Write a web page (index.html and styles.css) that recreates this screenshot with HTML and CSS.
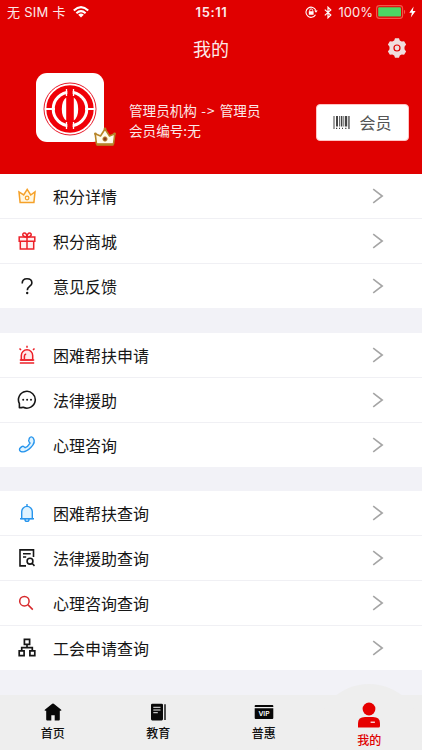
FILE: index.html
```html
<!DOCTYPE html>
<html lang="zh-CN">
<head>
<meta charset="utf-8">
<title>我的</title>
<link rel="stylesheet" href="styles.css">
</head>
<body>
<div class="app">
  <header class="header">
    <div class="status">
      <div class="status-left">
        <span>无 SIM 卡</span>
        <svg class="wifi" viewBox="0 0 16 12"><g fill="none" stroke="#fff" stroke-width="2.1"><path d="M.8 4.5Q8-2.1 15.2 4.5M3.4 7.2Q8 3 12.6 7.2"/></g><path d="M5.2 8.7Q8 6.5 10.8 8.7L8 11.5z" fill="#fff"/></svg>
      </div>
      <b class="clock">15:11</b>
      <div class="status-right">
        <svg class="lock" viewBox="0 0 13 12"><g fill="none" stroke="#fff"><path d="M10.5 8.8A5.1 5.1 0 1 1 10.9 4.6" stroke-width="1.1"/><path d="M4.7 5.6V4.4a1.5 1.5 0 0 1 3 0v1.2" stroke-width=".9"/></g><path d="M3.8 5.2h4.8v3.6H3.8zM9.2 4.4h3.5L11 6.8z" fill="#fff"/></svg>
        <svg class="bluetooth" viewBox="0 0 8 13"><path d="M.8 3.6l6 5.4L4 11.8V1.2L6.8 4l-6 5.4" fill="none" stroke="#fff" stroke-width="1.2"/></svg>
        <span class="percent">100%</span>
        <svg class="battery" viewBox="0 0 30 14"><rect x=".6" y=".6" width="26" height="12.8" rx="2.8" fill="none" stroke="#f5564a" stroke-width="1.1"/><rect x="2.2" y="2.2" width="22.8" height="9.4" rx="1.2" fill="#4cd964"/><path d="M28 4.8q1.2.6 1.2 2.2T28 9.2z" fill="#f5564a"/></svg>
        <svg class="bolt" viewBox="0 0 7 12"><path d="M4.6.5L.3 6.7h2.6L1.8 11.5 6.6 5H3.8z" fill="#fff"/></svg>
      </div>
    </div>
    <div class="titlebar">
      <h1>我的</h1>
      <svg class="gear" viewBox="0 0 20 20"><path fill="#f0dede" fill-rule="evenodd" d="M7.2 2.5L8 .3h4l.8 2.2 1.9 1.1 2.4-.4 2 3.4L17.5 8.8v2.4l1.6 2.2-2 3.4-2.4-.4-1.9 1.1-.8 2.2H8l-.8-2.2-1.9-1.1-2.4.4-2-3.4 1.6-2.2V8.8L.9 6.6l2-3.4 2.4.4zM10 6.4a3.6 3.6 0 1 0 0 7.2 3.6 3.6 0 0 0 0-7.2z"/><circle cx="10" cy="10" r="2.4" fill="#f0dede"/></svg>
    </div>
    <div class="profile">
      <div class="avatar">
        <svg class="emblem" viewBox="0 0 54 54">
          <circle cx="27" cy="27" r="26" fill="none" stroke="#e50012" stroke-width=".9"/>
          <circle cx="27" cy="27" r="21" fill="none" stroke="#f00008" stroke-width="5.4"/>
          <circle cx="27" cy="27" r="15.3" fill="#f00008"/>
          <path d="M1.8 27H12M42 27h10.2" stroke="#fff" stroke-width="2"/>
          <path d="M23.2 15.4v23.2q-4.4-3.4-4.4-11.6t4.4-11.6zM30.8 15.4v23.2q4.4-3.4 4.4-11.6t-4.4-11.6z" fill="#fff"/>
          <path d="M23.6 7v7M30.4 7v7M23.6 40v7M30.4 40v7" stroke="#fff" stroke-width="1.5"/>
          <path d="M24.4 4h5.2v46h-5.2z" fill="#f00008"/>
        </svg>
        <svg class="crown-badge" viewBox="0 0 22 20"><path d="M2.5 17L1.2 6.8 6.5 9 11 2l4.5 7 5.3-2.2L19.5 17z" fill="#fffbed" stroke="#b78529" stroke-width="1.6" stroke-linejoin="round"/><path d="M2.5 17.8h17" stroke="#b78529" stroke-width="2"/><circle cx="11" cy="12" r="2.2" fill="#8c3d1c" stroke="#c79841" stroke-width=".9"/><g fill="#b78529"><circle cx="11" cy="2" r="1.4"/><circle cx="1.4" cy="6.8" r="1.3"/><circle cx="20.6" cy="6.8" r="1.3"/></g></svg>
      </div>
      <div class="identity"><div>管理员机构 <span class="arrow">-&gt;</span> 管理员</div><div>会员编号:无</div></div>
      <button class="member">
        <svg class="barcode" viewBox="0 0 17 13"><g fill="#444"><path d="M.5 0h1v13h-1zM3 0h2v10.6H3zM6 0h.8v10.6H6zM7.8 0h1.6v10.6H7.8zM10.4 0h.8v10.6h-.8zM12 0h2.2v10.6H12zM15.3 0h1.3v13h-1.3zM3 11.7h1.2V13H3zM6 11.7h1V13H6zM9 11.7h1V13H9zM12.2 11.7h1.2V13h-1.2z"/></g></svg>
        <span>会员</span>
      </button>
    </div>
  </header>

  <main class="menu">
    <section class="group">
      <div class="row"><svg class="icon" viewBox="0 0 20 20"><path d="M3.1 16.4L2 5.9l4.7 3.1L10.2 3.4l3.5 5.6 4.3-3.1-1.1 10.5z" fill="#fff7e2" stroke="#f5a129" stroke-width="1.5"/><circle cx="10.1" cy="12" r="1.8" fill="none" stroke="#f5a129" stroke-width="1.2"/></svg><span>积分详情</span><svg class="chevron" viewBox="0 0 12 16"><path d="M1.2 1.2L10.2 8l-9 6.8"/></svg></div>
      <div class="row"><svg class="icon" viewBox="0 0 20 20"><g fill="#fff0f0" stroke="#ed2028" stroke-width="1.5"><path d="M3.3 10.3h13.4v7.7H3.3zM2.2 6.1h15.6v4.2H2.2z"/><path d="M9.8 5.9C4.6 6.2 5.2 1.9 7.3 1.9c2 0 2.5 2 2.5 4zM10.2 5.9c5.2.3 4.6-4 2.5-4-2 0-2.5 2-2.5 4zM10 6.1V18"/></g></svg><span>积分商城</span><svg class="chevron" viewBox="0 0 12 16"><path d="M1.2 1.2L10.2 8l-9 6.8"/></svg></div>
      <div class="row"><svg class="icon" viewBox="0 0 20 20"><path d="M5.2 7.4C5.2 4.1 7.2 2.7 10 2.7s4.9 1.5 4.9 4.2c0 3.3-4.6 3.2-4.6 7.3" fill="none" stroke="#161616" stroke-width="1.6"/><circle cx="10.2" cy="17" r="1.2" fill="#161616"/></svg><span>意见反馈</span><svg class="chevron" viewBox="0 0 12 16"><path d="M1.2 1.2L10.2 8l-9 6.8"/></svg></div>
    </section>
    <section class="group">
      <div class="row"><svg class="icon" viewBox="0 0 20 20"><g fill="none" stroke="#ed2028" stroke-width="1.5"><path d="M4.3 14.9v-4.4a5.7 5.7 0 0 1 11.4 0v4.4z" fill="#ffeaea"/><path d="M2.8 15h14.4M2.8 18h14.4M10 .8v2M2.5 3.5L4 5M17.5 3.5L16 5M7.4 14V11q0-1.7 1.8-2"/></g></svg><span>困难帮扶申请</span><svg class="chevron" viewBox="0 0 12 16"><path d="M1.2 1.2L10.2 8l-9 6.8"/></svg></div>
      <div class="row"><svg class="icon" viewBox="0 0 20 20"><path d="M2.4 17.8v-4.2A8.4 8.4 0 1 1 6.2 17.3q-1.4.5-3.8.5z" fill="none" stroke="#161616" stroke-width="1.6" stroke-linejoin="round"/><g fill="#161616"><circle cx="6.2" cy="9.8" r="1"/><circle cx="10.1" cy="9.8" r="1"/><circle cx="14" cy="9.8" r="1"/></g></svg><span>法律援助</span><svg class="chevron" viewBox="0 0 12 16"><path d="M1.2 1.2L10.2 8l-9 6.8"/></svg></div>
      <div class="row"><svg class="icon" viewBox="0 0 20 20"><path d="M12.4 3.1c1.1-1.7 2.8-1.5 3.9 0 1.7 2.5.6 6.3-2.5 9.5-3.5 3.5-7.7 4.9-10.2 3.7-1.4-.9-1.4-2.5-.3-3.4l1.5-1.3q1.2-.9 2.2.1l1.2 1q2.6-.9 4.8-4.6l-1-1.5q-.7-1.3.1-2.4z" fill="#dff3ff" stroke="#2795ed" stroke-width="1.4"/></svg><span>心理咨询</span><svg class="chevron" viewBox="0 0 12 16"><path d="M1.2 1.2L10.2 8l-9 6.8"/></svg></div>
    </section>
    <section class="group">
      <div class="row"><svg class="icon" viewBox="0 0 20 20"><g fill="none" stroke="#2795ed" stroke-width="1.4"><path d="M4.7 15.6V8.7a5.3 5.3 0 0 1 10.6 0v6.9z" fill="#dff3ff"/><path d="M3 15.8h14M10 1v2.2M8 16.4q0 1.9 2 1.9t2-1.9"/></g></svg><span>困难帮扶查询</span><svg class="chevron" viewBox="0 0 12 16"><path d="M1.2 1.2L10.2 8l-9 6.8"/></svg></div>
      <div class="row"><svg class="icon" viewBox="0 0 20 20"><g fill="none" stroke="#161616" stroke-width="1.6"><path d="M9 17.9H3V1.9h13.5v7.2M6 5.7h7.7M6 9h3.2"/><circle cx="13" cy="13.2" r="2.9"/><path d="M15 15.3l2.5 2.6"/></g></svg><span>法律援助查询</span><svg class="chevron" viewBox="0 0 12 16"><path d="M1.2 1.2L10.2 8l-9 6.8"/></svg></div>
      <div class="row"><svg class="icon" viewBox="0 0 20 20"><g fill="none" stroke="#d7292c" stroke-width="1.5"><circle cx="7.4" cy="8.2" r="4.7"/><path d="M10.8 11.6l5 5"/></g></svg><span>心理咨询查询</span><svg class="chevron" viewBox="0 0 12 16"><path d="M1.2 1.2L10.2 8l-9 6.8"/></svg></div>
      <div class="row"><svg class="icon" viewBox="0 0 20 20"><g fill="none" stroke="#161616" stroke-width="1.7"><path d="M7.4 1.4h5.2v5H7.4zM2.2 12.9h4.9v4.8H2.2zM12.9 12.9h4.9v4.8h-4.9zM10 6.6v3M4.7 12.9V9.7h10.6v3.2"/></g></svg><span>工会申请查询</span><svg class="chevron" viewBox="0 0 12 16"><path d="M1.2 1.2L10.2 8l-9 6.8"/></svg></div>
    </section>
  </main>

  <nav class="tabs">
    <div class="tab"><svg class="tab-icon" viewBox="0 0 20 20"><path d="M10 1.6q.7 0 1.4.6l6.8 5.5q.8 1-.7 1h-.7v8.8q0 1-1 1h-4.1v-5.2H8.3v5.2H4.2q-1 0-1-1V8.7h-.7q-1.5 0-.7-1l6.8-5.5q.7-.6 1.4-.6z"/></svg><span>首页</span></div>
    <div class="tab"><svg class="tab-icon" viewBox="0 0 20 20"><rect x="3" y="1.8" width="12" height="16.6" rx="1.3"/><path d="M16.3 2.3h1.4v15.8h-1.4z"/><path d="M5.3 5.3h7.2M5.3 8h7.2M5.3 10.7h4.5" stroke="#eee" stroke-width="1"/></svg><span>教育</span></div>
    <div class="tab"><svg class="tab-icon" viewBox="0 0 20 20"><path d="M1.6 2.9h16.8q.9 0 .9 1v1.2H.7V3.9q0-1 .9-1zM.7 6.2h18.6v9.9q0 1-1 1H1.7q-1 0-1-1z"/><text class="vip" x="10" y="14" text-anchor="middle">VIP</text></svg><span>普惠</span></div>
    <div class="tab active"><svg class="user-icon" viewBox="0 0 24 26"><circle cx="12" cy="7" r="6.4"/><path d="M1 25.5v-4.2q0-6.3 7-6.3h8q7 0 7 6.3v2.7q0 1.5-1.5 1.5z"/><path d="M13.6 20.2h4.3" stroke="#fff" stroke-width="1.2"/></svg><span>我的</span></div>
  </nav>
</div>
</body>
</html>
```
FILE: styles.css
```css
* { box-sizing: border-box; }

body {
  margin: 0;
  background: #f2f2f7;
  color: #161616;
  font-family: "Noto Sans CJK SC", sans-serif;
}

svg { display: block; flex: none; }

.app {
  width: 422px;
  height: 750px;
  display: flex;
  flex-direction: column;
  overflow: hidden;
}

.header {
  height: 174px;
  flex: none;
  background: #e00000;
  color: #fbeaea;
}

.status {
  height: 24px;
  display: grid;
  grid-template-columns: 1fr auto 1fr;
  align-items: center;
  padding: 0 6px 0 7px;
  font-family: Inter, "Noto Sans CJK SC", sans-serif;
  font-size: 13px;
  line-height: 24px;
}

.status-left, .status-right { display: flex; align-items: center; }
.status-left { gap: 7px; letter-spacing: 0.25px; }
.status-right { justify-content: flex-end; }
.wifi { width: 16px; height: 12px; }
.clock { font-weight: 600; letter-spacing: 0.6px; }
.lock { width: 13px; height: 12px; margin-right: 6px; }
.bluetooth { width: 8px; height: 13px; margin-right: 7px; }
.percent { margin-right: 3px; }
.battery { width: 30px; height: 14px; margin-right: 3px; }
.bolt { width: 7px; height: 12px; }

.titlebar {
  height: 48px;
  display: grid;
  grid-template-columns: 1fr auto 1fr;
  align-items: center;
  padding-right: 15px;
  padding-left: 15px;
}

.titlebar h1 {
  grid-column: 2;
  margin: 0;
  font-size: 18px;
  font-weight: 400;
  line-height: 46px;
}

.gear { width: 20px; height: 20px; justify-self: end; }

.profile {
  display: flex;
  align-items: flex-start;
  padding: 1px 13px 0 36px;
}

.avatar {
  position: relative;
  width: 68px;
  height: 69px;
  padding: 8.5px 7.3px;
  border-radius: 11px;
  background: #fff;
}

.emblem { width: 54px; height: 54px; }

.crown-badge {
  position: absolute;
  left: 58px;
  top: 54px;
  width: 22px;
  height: 20px;
}

.identity {
  margin: 27px 0 0 25px;
  font-size: 13.6px;
  line-height: 20px;
  white-space: nowrap;
}

.arrow { margin: 0 1.2px; letter-spacing: 1px; }

.member {
  display: flex;
  align-items: center;
  justify-content: center;
  gap: 9px;
  width: 93px;
  height: 37px;
  margin: 31px 0 0 auto;
  padding: 0 0 1px;
  border: 1px solid #ffc4c4;
  border-radius: 4px;
  background: #fff;
  color: #555;
  font-family: inherit;
  font-size: 16px;
}

.barcode { width: 17px; height: 13px; }

.menu { flex: 1; }

.group {
  margin-bottom: 24.5px;
  background: #fff;
}

.row {
  height: 45px;
  display: flex;
  align-items: center;
  padding: 0 38px 0 17px;
  border-bottom: 1px solid #f0f0f4;
  font-size: 16px;
  line-height: 44px;
}

.row:last-child { height: 44px; border-bottom: 0; }
.icon { width: 20px; height: 20px; margin-right: 16px; }

.chevron {
  width: 12px;
  height: 16px;
  margin-left: auto;
  fill: none;
  stroke: #a5a5a5;
  stroke-width: 1.6;
}

.tabs {
  position: relative;
  flex: none;
  height: 56px;
  display: grid;
  grid-template-columns: repeat(4, 1fr);
  background: #eee;
}

.tabs::before {
  content: "";
  position: absolute;
  right: 0;
  top: -11px;
  width: 106px;
  height: 106px;
  border-radius: 50%;
  background: #eee;
}

.tab {
  position: relative;
  display: flex;
  flex-direction: column;
  align-items: center;
  padding-top: 7px;
  color: #111;
  fill: #080808;
  font-size: 12px;
  font-weight: 500;
  line-height: 16px;
}

.tab-icon { width: 20px; height: 20px; margin-bottom: 3px; }
.vip { fill: #fff; font: 600 6.8px Inter, sans-serif; }
.active { color: #e00000; fill: #e60000; }
.user-icon { width: 24px; height: 26px; margin-bottom: 4px; }
```
